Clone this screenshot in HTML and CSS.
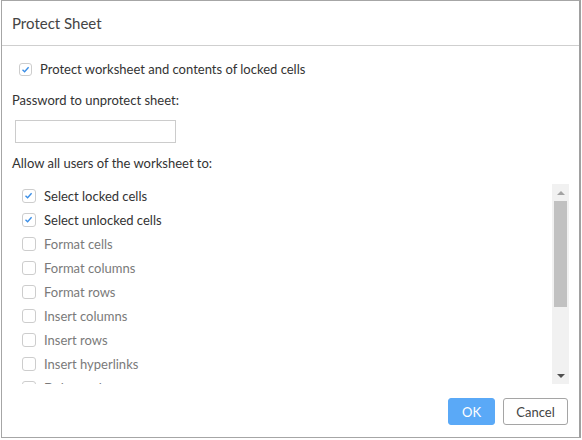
FILE: index.html
```html
<!DOCTYPE html>
<html>
<head>
<meta charset="utf-8">
<link rel="stylesheet" href="styles.css">
</head>
<body>
<div class="dialog">
  <div class="header"><span class="title">Protect Sheet</span></div>
  <div class="body">
    <label class="main-row">
      <span class="cb checked"><svg viewBox="0 0 13 13" width="13" height="13"><path d="M3.5 6.8 L5.6 8.7 L9.6 4.3" fill="none" stroke="#3a8ee6" stroke-width="1.4"/></svg></span>
      <span class="lbl dark">Protect worksheet and contents of locked cells</span>
    </label>
    <div class="text-row">Password to unprotect sheet:</div>
    <input class="pw" type="password">
    <div class="text-row allow">Allow all users of the worksheet to:</div>
    <div class="list">
      <div class="items">
        <div class="item"><span class="cb checked"><svg viewBox="0 0 13 13" width="13" height="13"><path d="M3.5 6.8 L5.6 8.7 L9.6 4.3" fill="none" stroke="#3a8ee6" stroke-width="1.4"/></svg></span><span class="lbl dark">Select locked cells</span></div>
        <div class="item"><span class="cb checked"><svg viewBox="0 0 13 13" width="13" height="13"><path d="M3.5 6.8 L5.6 8.7 L9.6 4.3" fill="none" stroke="#3a8ee6" stroke-width="1.4"/></svg></span><span class="lbl dark">Select unlocked cells</span></div>
        <div class="item"><span class="cb"></span><span class="lbl">Format cells</span></div>
        <div class="item"><span class="cb"></span><span class="lbl">Format columns</span></div>
        <div class="item"><span class="cb"></span><span class="lbl">Format rows</span></div>
        <div class="item"><span class="cb"></span><span class="lbl">Insert columns</span></div>
        <div class="item"><span class="cb"></span><span class="lbl">Insert rows</span></div>
        <div class="item"><span class="cb"></span><span class="lbl">Insert hyperlinks</span></div>
        <div class="item"><span class="cb"></span><span class="lbl">Delete columns</span></div>
      </div>
      <div class="scrollbar">
        <div class="arrow up"></div>
        <div class="track"><div class="thumb"></div></div>
        <div class="arrow down"></div>
      </div>
    </div>
  </div>
  <div class="footer">
    <button class="btn ok">OK</button>
    <button class="btn cancel">Cancel</button>
  </div>
</div>
</body>
</html>
```
FILE: styles.css
```css
* { box-sizing: border-box; }
html, body { margin: 0; padding: 0; background: #fff; }
body {
  font-family: Lato, "Open Sans", sans-serif;
  font-size: 13px;
  color: #333;
  width: 582px;
  height: 440px;
  overflow: hidden;
}
.dialog {
  margin-left: 1px;
  width: 580px;
  height: 438px;
  border: 1px solid #a6a6a6;
  border-right: 2px solid #a0a0a0;
  background: #fff;
  display: flex;
  flex-direction: column;
}
.header {
  height: 45px;
  flex: none;
  border-bottom: 1px solid #cfcfcf;
  display: flex;
  align-items: center;
  padding-left: 10px;
  padding-bottom: 1px;
}
.title { font-size: 15px; color: #444; }
.body {
  flex: 1;
  padding: 12px 10px 0 10px;
  display: flex;
  flex-direction: column;
}
.main-row {
  height: 22px;
  display: flex;
  align-items: center;
  margin-left: 7px;
}
.cb {
  width: 13px;
  height: 13px;
  border: 1px solid #cdcdcd;
  border-radius: 3px;
  flex: none;
  display: inline-flex;
  align-items: center;
  justify-content: center;
  margin-right: 8px;
  position: relative;
}
.cb svg { position: absolute; left: -1px; top: -1px; }
.lbl { color: #7a7a7a; white-space: nowrap; }
.lbl.dark { color: #333; }
.text-row {
  height: 20px;
  line-height: 20px;
  margin-top: 10px;
}
.pw {
  margin: 10px 0 0 3px;
  width: 161px;
  height: 23px;
  border: 1px solid #cccccc;
  padding: 0;
  outline: none;
}
.allow { margin-top: 10px; }
.list {
  margin-top: 11px;
  height: 200px;
  display: flex;
}
.items {
  flex: 1;
  overflow: hidden;
}
.item {
  height: 24px;
  display: flex;
  align-items: center;
  padding-left: 10px;
}
.item .cb { width: 14px; height: 14px; }
.scrollbar {
  width: 17px;
  flex: none;
  background: #f1f1f1;
  display: flex;
  flex-direction: column;
}
.arrow {
  height: 17px;
  flex: none;
  display: flex;
  align-items: center;
  justify-content: center;
}
.arrow::before {
  content: "";
  width: 0;
  height: 0;
  border-left: 4px solid transparent;
  border-right: 4px solid transparent;
}
.arrow.up::before { border-bottom: 4px solid #a3a3a3; }
.arrow.down::before { border-top: 4px solid #505050; }
.track { flex: 1; padding: 0 2px; }
.thumb {
  height: 106px;
  background: #c1c1c1;
}
.footer {
  flex: none;
  display: flex;
  justify-content: flex-end;
  gap: 8px;
  padding: 13px 11px 12px 0;
}
.btn {
  height: 27px;
  font-family: Lato, "Open Sans", sans-serif;
  font-size: 13px;
  border-radius: 3px;
  padding: 0;
  cursor: pointer;
}
.ok {
  width: 47px;
  background: #5aa9f7;
  border: 1px solid #5aa9f7;
  color: #fff;
}
.cancel {
  width: 65px;
  background: #fff;
  border: 1px solid #a5a5a5;
  color: #444;
}
```
